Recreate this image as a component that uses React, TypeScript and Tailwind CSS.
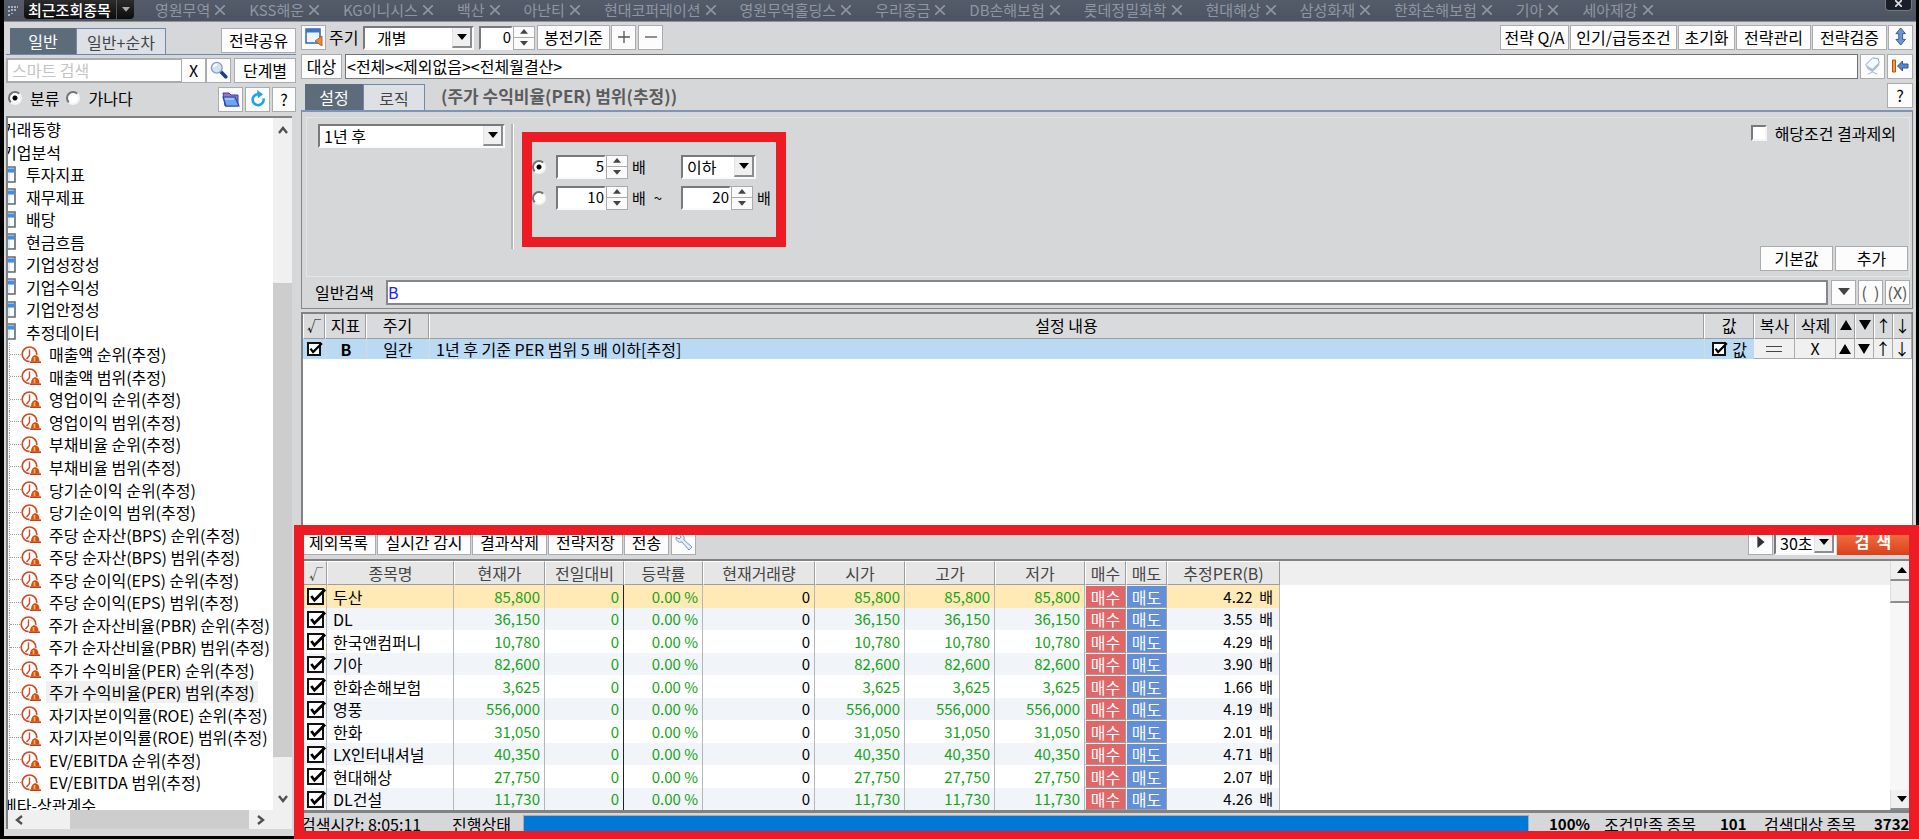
import React from "react";

const openTabs = [
  "영원무역", "KSS해운", "KG이니시스", "백산", "아난티", "현대코퍼레이션", "영원무역홀딩스", "우리종금",
  "DB손해보험", "롯데정밀화학", "현대해상", "삼성화재", "한화손해보험", "기아", "세아제강",
];

const folders = ["투자지표", "재무제표", "배당", "현금흐름", "기업성장성", "기업수익성", "기업안정성", "추정데이터"];

const indicators = [
  "매출액 순위(추정)", "매출액 범위(추정)", "영업이익 순위(추정)", "영업이익 범위(추정)",
  "부채비율 순위(추정)", "부채비율 범위(추정)", "당기순이익 순위(추정)", "당기순이익 범위(추정)",
  "주당 순자산(BPS) 순위(추정)", "주당 순자산(BPS) 범위(추정)", "주당 순이익(EPS) 순위(추정)", "주당 순이익(EPS) 범위(추정)",
  "주가 순자산비율(PBR) 순위(추정)", "주가 순자산비율(PBR) 범위(추정)", "주가 수익비율(PER) 순위(추정)", "주가 수익비율(PER) 범위(추정)",
  "자기자본이익률(ROE) 순위(추정)", "자기자본이익률(ROE) 범위(추정)", "EV/EBITDA 순위(추정)", "EV/EBITDA 범위(추정)",
];

const selectedIndicator = "주가 수익비율(PER) 범위(추정)";

const stocks = [
  { name: "두산", price: "85,800", per: "4.22" },
  { name: "DL", price: "36,150", per: "3.55" },
  { name: "한국앤컴퍼니", price: "10,780", per: "4.29" },
  { name: "기아", price: "82,600", per: "3.90" },
  { name: "한화손해보험", price: "3,625", per: "1.66" },
  { name: "영풍", price: "556,000", per: "4.19" },
  { name: "한화", price: "31,050", per: "2.01" },
  { name: "LX인터내셔널", price: "40,350", per: "4.71" },
  { name: "현대해상", price: "27,750", per: "2.07" },
  { name: "DL건설", price: "11,730", per: "4.26" },
];

function Btn({ className = "", children, label }: { className?: string; children: React.ReactNode; label?: string }) {
  return (
    <button
      type="button"
      aria-label={label}
      className={`flex h-[25px] shrink-0 items-center justify-center whitespace-nowrap border border-[#a9abad] bg-[#fcfcfc] pb-0.5 leading-5 ${className}`}
    >
      {children}
    </button>
  );
}

function Tri({ dir, className = "w-2.5" }: { dir: "up" | "down" | "right"; className?: string }) {
  const d = dir === "up" ? "M0 6 5 0l5 6z" : dir === "down" ? "M0 0h10L5 6z" : "M2 0v10l6-5z";
  return (
    <svg viewBox={dir === "right" ? "0 0 10 10" : "0 0 10 6"} preserveAspectRatio="none" className={className} fill="currentColor" aria-hidden="true">
      <path d={d} />
    </svg>
  );
}

function Select({ label, value, className = "" }: { label: string; value: string; className?: string }) {
  return (
    <span className={`flex h-6 shrink-0 border-2 border-[#fafafa] border-t-[#77797b] border-l-[#77797b] bg-white ${className}`}>
      <select aria-label={label} className="min-w-0 flex-1 appearance-none bg-white pb-0.5 pl-1 leading-5 outline-none">
        <option>{value}</option>
      </select>
      <span className="flex w-5 shrink-0 items-center justify-center border-r-2 border-b-2 border-l border-[#8a8c8e] border-l-[#e4e4e4] bg-[#f0f0f0]">
        <Tri dir="down" className="w-2.5" />
      </span>
    </span>
  );
}

function NumberBox({ label, value, className = "w-[50px]" }: { label: string; value: string; className?: string }) {
  return (
    <span className="flex h-6 shrink-0">
      <input
        aria-label={label}
        defaultValue={value}
        className={`h-6 border-2 border-[#fafafa] border-t-[#77797b] border-l-[#77797b] bg-white pb-0.5 text-right text-[15px] outline-none ${className}`}
      />
      <span className="flex w-[22px] flex-col border border-[#a9abad] bg-[#fafafa] text-[#444]">
        <button type="button" aria-label={`${label} 증가`} className="flex flex-1 items-center justify-center border-b border-[#a9abad]">
          <Tri dir="up" className="w-2" />
        </button>
        <button type="button" aria-label={`${label} 감소`} className="flex flex-1 items-center justify-center">
          <Tri dir="down" className="w-2" />
        </button>
      </span>
    </span>
  );
}

function Radio({ name, label, checked }: { name: string; label: string; checked?: boolean }) {
  return (
    <input
      type="radio"
      name={name}
      aria-label={label}
      defaultChecked={checked}
      className="m-0 size-3.5 shrink-0 appearance-none rounded-full border-2 border-[#f4f4f4] border-t-[#707274] border-l-[#707274] bg-white checked:bg-[radial-gradient(circle,#000_0_2px,#fff_3px)]"
    />
  );
}

function Check({ label, className = "size-4" }: { label: string; className?: string }) {
  return (
    <span className={`relative block shrink-0 ${className}`}>
      <input type="checkbox" aria-label={label} defaultChecked className="block size-full appearance-none border-2 border-[#111] bg-white" />
      <svg viewBox="0 0 16 16" className="pointer-events-none absolute inset-0 size-full overflow-visible" fill="none" stroke="#000" strokeWidth="2.6" aria-hidden="true">
        <path d="M4 7.5 7 11.5 17 1.5" />
      </svg>
    </span>
  );
}

function ClockIcon() {
  return (
    <svg viewBox="0 0 20 17" className="h-[17px] w-5 shrink-0" fill="none" aria-hidden="true">
      <circle cx="8.500" cy="8.300" r="7.300" fill="#fff" stroke="#cf4a20" strokeWidth="1.700" />
      <path d="M8.500 3.500v6L5.500 13" stroke="#c9502c" strokeWidth="1.400" />
      <path d="M8.500 17C8.500 5.500 20 5.500 20 17z" fill="#fff" />
      <path d="M10 15.500c0-8.500 8.500-8.500 8.500 0z" fill="#d84a16" />
      <path d="M13.500 11v4" stroke="#f8b830" strokeWidth="1.800" />
      <path d="M9 16.200h11" stroke="#b8380e" strokeWidth="1.500" />
    </svg>
  );
}

function FolderIcon() {
  return (
    <svg viewBox="0 0 14 17" className="h-[17px] w-3.5 shrink-0" aria-hidden="true">
      <path d="M0 1h13v15H0z" fill="#d9ecfb" stroke="#666a70" strokeWidth="1.600" />
      <path d="M1 2.500h11v4H1z" fill="#3f8fe8" />
      <path d="M8 7h4v8H8z" fill="#fff" />
    </svg>
  );
}

function Sidebar() {
  return (
    <aside className="flex w-[292px] shrink-0 flex-col pt-1.5 pb-[7px] pl-0.5">
      <div className="flex h-[27px] items-start justify-between border-b border-[#6f88b0]">
        <div className="ml-1 flex">
          <button type="button" className="h-[26px] w-[66px] bg-[#5d6c7b] leading-6 text-white">일반</button>
          <button type="button" className="h-[26px] w-[90px] border border-b-0 border-[#6f88b0] bg-[#dde0e4] leading-6 text-[#444]">일반+순차</button>
        </div>
        <Btn className="w-[75px]">전략공유</Btn>
      </div>
      <div className="mt-[3px] flex h-[25px]">
        <input aria-label="스마트 검색" placeholder="스마트 검색" className="h-[25px] min-w-0 flex-1 border-2 border-r border-[#a9abad] bg-white pb-0.5 pl-1 outline-none placeholder:text-[#c4c4c4]" />
        <Btn className="w-6 border-l-0" label="지우기">X</Btn>
        <Btn className="w-[25px]" label="검색">
          <svg viewBox="0 0 20 20" className="size-[18px]" aria-hidden="true">
            <path d="m11.500 11.500 6 6" stroke="#1d3f80" strokeWidth="4" strokeLinecap="round" />
            <circle cx="7.500" cy="7.500" r="6" fill="#cfe3f7" stroke="#8d9fc0" strokeWidth="1.500" />
            <path d="M4 7a4 4 0 0 1 4-3" stroke="#fff" strokeWidth="1.800" fill="none" />
          </svg>
        </Btn>
        <Btn className="ml-[3px] w-[62px]">단계별</Btn>
      </div>
      <div className="mt-1 flex h-[25px] items-start">
        <label className="ml-0.5 flex items-center gap-2 leading-[22px]"><Radio name="sort" label="분류" checked />분류</label>
        <label className="ml-[7px] flex items-center gap-2 leading-[22px]"><Radio name="sort" label="가나다" />가나다</label>
        <div className="ml-auto flex gap-0.5">
          <Btn className="w-[25px]" label="폴더">
            <svg viewBox="0 0 18 18" className="size-[18px]" aria-hidden="true">
              <path d="M1 3h6l2 2h7v11H3z" fill="#9a78b8" stroke="#3c3fa8" />
              <path d="M1 7h12l4 9H4z" fill="#6fa4ee" stroke="#2546b4" strokeWidth="1.200" />
              <path d="m3 9 9 0" stroke="#cfe2ff" />
            </svg>
          </Btn>
          <Btn className="w-[25px]" label="새로고침">
            <svg viewBox="0 0 18 18" className="size-[18px]" fill="none" aria-hidden="true">
              <path d="M14.500 8.500a5.500 5.500 0 1 1-5-4.300" stroke="#1fa3e6" strokeWidth="2.600" />
              <path d="m8 0 6 4.300-5 4z" fill="#1fa3e6" />
            </svg>
          </Btn>
          <Btn className="w-6" label="도움말">?</Btn>
        </div>
      </div>
      <div className="mt-1 mr-1 flex min-h-0 flex-1 flex-col border-t-2 border-l-2 border-[#808284] bg-white">
        <div className="flex min-h-0 flex-1">
          <div className="min-w-0 flex-1 overflow-hidden">
            <ul className="flex h-[698px] flex-col leading-[22px]">
              <li className="-ml-1.5 flex flex-1 items-center">거래동향</li>
              <li className="-ml-1.5 flex flex-1 items-center">기업분석</li>
              {folders.map((f) => (
                <li key={f} className="-ml-1.5 flex flex-1 items-center gap-2.5"><FolderIcon />{f}</li>
              ))}
              {indicators.map((t) => (
                <li key={t} className="ml-px flex flex-1 items-center border-l border-dotted border-[#999]">
                  <span className="w-[11px] border-t border-dotted border-[#999]" />
                  <ClockIcon />
                  <button type="button" className={t === selectedIndicator ? "ml-[5px] bg-[#f0f0f0] px-[3px] whitespace-nowrap" : "ml-[5px] px-[3px] whitespace-nowrap"}>{t}</button>
                </li>
              ))}
              <li className="-ml-1.5 flex flex-1 items-center">베타-상관계수</li>
            </ul>
          </div>
          <div className="flex w-[19px] shrink-0 flex-col items-center bg-[#f0f0f0] text-[#505050]">
            <svg viewBox="0 0 10 8" className="mt-2 w-2.5" fill="none" stroke="currentColor" strokeWidth="2.400" aria-hidden="true"><path d="m1 7 4-5 4 5" /></svg>
            <span className="mt-[149px] min-h-0 w-full flex-1 bg-[#cdcdcd]" />
            <svg viewBox="0 0 10 8" className="mt-[38px] mb-[7px] w-2.5" fill="none" stroke="currentColor" strokeWidth="2.400" aria-hidden="true"><path d="m1 1 4 5 4-5" /></svg>
          </div>
        </div>
        <div className="flex h-[19px] shrink-0 items-center bg-[#f0f0f0] text-[#505050]">
          <svg viewBox="0 0 8 10" className="ml-[7px] w-2" fill="none" stroke="currentColor" strokeWidth="2.400" aria-hidden="true"><path d="M7 1 2 5l5 4" /></svg>
          <span className="ml-[47px] h-full flex-1 bg-[#cdcdcd]" />
          <svg viewBox="0 0 8 10" className="mr-[27px] ml-2 w-2" fill="none" stroke="currentColor" strokeWidth="2.400" aria-hidden="true"><path d="m1 1 5 4-5 4" /></svg>
        </div>
      </div>
    </aside>
  );
}

function Toolbar() {
  return (
    <>
      <div className="flex h-[25px] items-center">
        <Btn className="w-[25px]" label="창">
          <svg viewBox="0 0 20 20" className="size-5" aria-hidden="true">
            <path d="M2 2h14v14H2z" fill="#eef6ff" stroke="#2f66b8" strokeWidth="1.500" />
            <path d="M2 2h14v3.500H2z" fill="#3a74c8" />
            <path d="M18 9v10l-7-5z" fill="#ee8a3a" stroke="#a8501a" strokeWidth=".8" />
          </svg>
        </Btn>
        <span className="ml-[3px] w-[34px] pb-0.5">주기</span>
        <Select label="주기" value="개별" className="w-[111px] pl-2" />
        <span className="ml-[5px]"><NumberBox label="봉전" value="0" className="w-[34px]" /></span>
        <Btn className="ml-0.5 w-[73px]">봉전기준</Btn>
        <Btn className="ml-px w-[25px]" label="추가"><svg viewBox="0 0 12 12" className="size-3" stroke="#555" strokeWidth="1.300" aria-hidden="true"><path d="M0 6h12M6 0v12" /></svg></Btn>
        <Btn className="ml-0.5 w-[25px]" label="삭제"><svg viewBox="0 0 12 12" className="size-3" stroke="#555" strokeWidth="1.300" aria-hidden="true"><path d="M0 6h12" /></svg></Btn>
        <div className="ml-auto flex gap-px">
          <Btn className="w-[69px]">전략 Q/A</Btn>
          <Btn className="w-[107px]">인기/급등조건</Btn>
          <Btn className="w-[57px]">초기화</Btn>
          <Btn className="w-[75px]">전략관리</Btn>
          <Btn className="w-[75px]">전략검증</Btn>
          <Btn className="w-[25px]" label="펼치기">
            <svg viewBox="0 0 12 20" className="h-[19px]" aria-hidden="true"><path d="m6 1 5 6H8v6h3l-5 6-5-6h3V7H1z" fill="#6e96d2" stroke="#33558e" /></svg>
          </Btn>
        </div>
      </div>
      <div className="mt-1 flex h-[25px]">
        <Btn className="w-[41px]">대상</Btn>
        <input aria-label="대상" defaultValue="<전체><제외없음><전체월결산>" className="ml-[3px] h-[25px] min-w-0 flex-1 border border-[#707274] bg-white px-px pb-0.5 outline-none" />
        <Btn className="ml-0.5 w-[25px]" label="지우개">
          <svg viewBox="0 0 18 20" className="h-[19px]" aria-hidden="true">
            <path d="m2 9 7-7 6 1 1 4-7 7-5-1z" fill="#f6fbff" stroke="#7e9cc8" />
            <path d="m2 9 7 5v3l-5-3zM9 14l7-7v3l-7 7z" fill="#a9bfdc" />
            <path d="m4 19 5-2 5 2" fill="none" stroke="#a8b4c4" />
          </svg>
        </Btn>
        <Btn className="ml-0.5 w-[26px]" label="접기">
          <svg viewBox="0 0 18 14" className="w-[18px]" aria-hidden="true">
            <path d="M1.500 1h3v12h-3z" fill="#f59a3c" stroke="#b5560e" />
            <path d="m6.500 7 5-5v3H17v4h-5.500v3z" fill="#5a86c8" stroke="#33558e" />
          </svg>
        </Btn>
      </div>
    </>
  );
}

function SettingsPanel() {
  return (
    <>
      <div className="mt-1 flex h-[27px] items-start">
        <button type="button" className="mt-px ml-1 h-[26px] w-[58px] bg-[#5d6c7b] leading-6 text-white">설정</button>
        <button type="button" className="mt-px h-[26px] w-[62px] border border-b-0 border-[#6f88b0] bg-[#dde0e4] leading-6 text-[#444]">로직</button>
        <h2 className="ml-4 text-[17px] leading-[26px] font-bold text-[#5c5c5c]">(주가 수익비율(PER) 범위(추정))</h2>
        <Btn className="ml-auto w-[26px]" label="도움말">?</Btn>
      </div>
      <section className="border border-t-2 border-[#85878a] border-t-[#7f94b6] pr-0.5 pb-[3px] pl-1">
        <div className="mt-[5px] flex h-40 border border-[#e4e5e6] pl-[11px]">
          <div className="pt-1.5"><Select label="기간" value="1년 후" className="w-[187px]" /></div>
          <div className="mt-1.5 ml-1.5 h-[125px] w-[3px] border-r border-l-2 border-[#b4b6b8] border-r-white" />
          <fieldset className="mt-3.5 ml-2 h-[115px] w-[264px] border-10 border-[#ed1c24] pt-3">
            <div className="flex h-[25px] items-center">
              <Radio name="range" label="이하 조건" checked />
              <span className="ml-2.5"><NumberBox label="배수" value="5" /></span>
              <span className="ml-1 w-[49px] text-[15px]">배</span>
              <Select label="비교" value="이하" className="w-[75px]" />
            </div>
            <div className="mt-1.5 flex h-[25px] items-center">
              <Radio name="range" label="범위 조건" />
              <span className="ml-2.5"><NumberBox label="최소" value="10" /></span>
              <span className="ml-1 flex w-[49px] gap-2 text-[15px]">배 <span>~</span></span>
              <NumberBox label="최대" value="20" />
              <span className="ml-1 text-[15px]">배</span>
            </div>
          </fieldset>
          <div className="ml-auto flex flex-col items-end justify-between pt-1 pr-px pb-[5px]">
            <label className="mr-3 flex items-center gap-2 leading-[22px]">
              <input type="checkbox" className="size-4 appearance-none border-2 border-[#f4f4f4] border-t-[#77797b] border-l-[#77797b] bg-white" />
              해당조건 결과제외
            </label>
            <div className="flex gap-0.5">
              <Btn className="w-[73px]">기본값</Btn>
              <Btn className="w-[73px]">추가</Btn>
            </div>
          </div>
        </div>
        <div className="mt-[3px] flex h-[25px] items-center gap-0.5 pl-[9px]">
          <label htmlFor="expr" className="w-[69px] pb-0.5">일반검색</label>
          <input id="expr" defaultValue="B" className="h-[25px] min-w-0 flex-1 border-2 border-[#85878a] bg-white pb-0.5 text-[#2020ff] outline-none" />
          <Btn className="ml-px w-[25px] text-[#444]" label="목록"><Tri dir="down" className="w-3" /></Btn>
          <Btn className="w-[25px] text-[#555]">(&nbsp; )</Btn>
          <Btn className="w-[25px] text-[#555]">(X)</Btn>
        </div>
      </section>
    </>
  );
}

const ruleHead = "h-[25px] border-r border-b border-[#9c9ea0] border-l border-l-white bg-[#d9dadc] p-0 pb-0.5 font-normal";
const ruleBtn = "border-r border-b border-[#a9abad] bg-[#f0f0f0] p-0";

function RuleGrid() {
  return (
    <section className="mt-[3px] min-h-0 flex-1 border-t-2 border-r border-l-2 border-[#808284] bg-white">
      <table className="w-full table-fixed border-separate border-spacing-0 text-center leading-5">
        <colgroup>
          <col className="w-[22px]" /><col className="w-[41px]" /><col className="w-[63px]" /><col />
          <col className="w-[50px]" /><col className="w-[41px]" /><col className="w-[41px]" />
          <col className="w-[19px]" /><col className="w-[19px]" /><col className="w-[19px]" /><col className="w-[19px]" />
        </colgroup>
        <thead>
          <tr>
            <th className={`${ruleHead} text-sm`}>√</th>
            {["지표", "주기", "설정 내용", "값", "복사", "삭제"].map((h) => <th key={h} className={ruleHead}>{h}</th>)}
            <th className={ruleHead}><Tri dir="up" className="mx-auto h-2.5 w-3" /></th>
            <th className={ruleHead}><Tri dir="down" className="mx-auto h-2.5 w-3" /></th>
            <th className={ruleHead}>↑</th>
            <th className={ruleHead}>↓</th>
          </tr>
        </thead>
        <tbody className="leading-[19px]">
          <tr className="bg-[#bad9f3]">
            <td className="p-0"><Check label="조건 B 사용" className="mx-auto size-3.5" /></td>
            <td className="border-l border-[#d6d8da] p-0 font-bold">B</td>
            <td className="border-l border-[#d6d8da] p-0">일간</td>
            <td className="border-l border-[#d6d8da] p-0 pl-1.5 text-left">1년 후 기준 PER 범위 5 배 이하[추정]</td>
            <td className="border-l border-[#d6d8da] p-0"><span className="flex items-center justify-center gap-1.5"><Check label="값 표시" className="size-3.5" />값</span></td>
            <td className={ruleBtn}><button type="button" aria-label="복사" className="mx-auto block h-1.5 w-4 border-y border-[#444]" /></td>
            <td className={ruleBtn}><button type="button" className="block w-full">X</button></td>
            <td className={ruleBtn}><button type="button" aria-label="맨 위로" className="block w-full"><Tri dir="up" className="mx-auto h-2.5 w-3" /></button></td>
            <td className={ruleBtn}><button type="button" aria-label="맨 아래로" className="block w-full"><Tri dir="down" className="mx-auto h-2.5 w-3" /></button></td>
            <td className={ruleBtn}><button type="button" className="block w-full">↑</button></td>
            <td className={ruleBtn}><button type="button" className="block w-full">↓</button></td>
          </tr>
        </tbody>
      </table>
    </section>
  );
}

const resultHead = "h-6 border border-white border-r-[#9c9ea0] border-b-[#9c9ea0] bg-[#e6e6e6] p-0 font-normal text-[#444]";
const greenCell = "border-r border-[#b4b6b8] p-0 pr-1 text-right text-[15px] text-[#17a217]";

function Results() {
  return (
    <section className="relative shrink-0">
      <div className="flex h-[34px] items-end gap-px pb-1">
        <Btn className="w-[75px]">제외목록</Btn>
        <Btn className="w-[94px]">실시간 감시</Btn>
        <Btn className="w-[75px]">결과삭제</Btn>
        <Btn className="w-[75px]">전략저장</Btn>
        <Btn className="w-[45px]">전송</Btn>
        <Btn className="ml-px w-[25px]" label="설정">
          <svg viewBox="0 0 20 20" className="size-5" aria-hidden="true">
            <path d="M2 5a4.500 4.500 0 0 0 6 5l7 8 3-3-8-7a4.500 4.500 0 0 0-5-6l2 3-2 2z" fill="#e3ecf6" stroke="#8296b4" />
          </svg>
        </Btn>
        <Btn className="ml-auto w-[25px] text-[#333]" label="시작"><Tri dir="right" className="size-3" /></Btn>
        <Select label="간격" value="30초" className="w-[62px]" />
        <button type="button" className="h-[25px] w-[76px] bg-linear-to-b from-[#f27445] to-[#dc3f18] pr-1 pb-1 text-base leading-5 font-bold text-white">검 &nbsp;색</button>
      </div>
      <div className="flex border-t-2 border-b-3 border-[#808284] bg-white">
        <div className="flex min-w-0 flex-1 bg-[#efefef]">
          <table className="w-[979px] table-fixed border-separate border-spacing-0 text-center">
            <colgroup>
              <col className="w-[26px]" /><col className="w-[127px]" /><col className="w-[91px]" /><col className="w-[79px]" />
              <col className="w-[79px]" /><col className="w-[112px]" /><col className="w-[90px]" /><col className="w-[90px]" />
              <col className="w-[90px]" /><col className="w-[41px]" /><col className="w-[41px]" /><col className="w-[113px]" />
            </colgroup>
            <thead className="leading-[22px]">
              <tr>
                <th className={`${resultHead} pl-1 text-sm leading-[22px]`}>√</th>
                {["종목명", "현재가", "전일대비", "등락률", "현재거래량", "시가", "고가", "저가", "매수", "매도", "추정PER(B)"].map((h) => (
                  <th key={h} className={resultHead}>{h}</th>
                ))}
              </tr>
            </thead>
            <tbody className="leading-5">
              {stocks.map((s, i) => (
                <tr key={s.name} className={`${i === 0 ? "bg-[#ffe9b5]" : i % 2 ? "bg-[#f1f4f9]" : "bg-white"} ${i % 2 ? "h-[22px]" : "h-[23px]"}`}>
                  <td className="border-r border-[#b4b6b8] p-0 pl-1"><Check label={`${s.name} 선택`} className="mx-auto size-[17px]" /></td>
                  <td className="border-r border-[#b4b6b8] p-0 pl-1.5 text-left whitespace-nowrap">{s.name}</td>
                  <td className={`${greenCell} leading-5`}>{s.price}</td>
                  <td className="border-r border-[#222] p-0 pr-1 text-right text-[15px] leading-5 text-[#17a217]">0</td>
                  <td className={`${greenCell} leading-5`}>0.00 %</td>
                  <td className="border-r border-[#b4b6b8] p-0 pr-1 text-right text-[15px] leading-5">0</td>
                  <td className={`${greenCell} leading-5`}>{s.price}</td>
                  <td className={`${greenCell} leading-5`}>{s.price}</td>
                  <td className={`${greenCell} leading-5`}>{s.price}</td>
                  <td className="border border-[#f0f0f0] border-r-[#9c9ea0] border-b-[#9c9ea0] bg-[#e06668] p-0 text-white"><button type="button" className="block w-full leading-5">매수</button></td>
                  <td className="border border-[#f0f0f0] border-r-[#9c9ea0] border-b-[#9c9ea0] bg-[#628fd8] p-0 text-white"><button type="button" className="block w-full leading-5">매도</button></td>
                  <td className="border-r border-[#b4b6b8] p-0 pr-1.5 text-right text-[15px] leading-5">{s.per} &nbsp;배</td>
                </tr>
              ))}
            </tbody>
          </table>
          <div className="mt-6 flex-1 bg-white" />
        </div>
        <div className="flex w-[23px] shrink-0 flex-col bg-[#f7f7f7]">
          <button type="button" aria-label="위로" className="flex h-5 w-full items-center border-b-2 border-l border-[#8a8c8e] border-l-[#ddd] bg-[#f0f0f0] pl-1.5"><Tri dir="up" className="w-2.5" /></button>
          <span className="h-[22px] w-full border-b-2 border-l border-[#8a8c8e] border-l-[#ddd] bg-[#f0f0f0]" />
          <button type="button" aria-label="아래로" className="mt-auto flex h-5 w-full items-center border-b-2 border-l border-[#8a8c8e] border-l-[#ddd] bg-[#f0f0f0] pl-1.5"><Tri dir="down" className="w-2.5" /></button>
        </div>
      </div>
      <div className="flex h-[23px] items-start leading-[22px] whitespace-nowrap">
        <span className="w-[151px]">검색시간: 8:05:11</span>
        <span className="w-[71px]">진행상태</span>
        <div role="progressbar" aria-label="진행상태" aria-valuenow={100} className="mt-0.5 h-5 flex-1 border border-[#a9abad] bg-[#0078d7]" />
        <b className="w-[75px] pl-5 text-[15px]">100%</b>
        <span className="w-[116px]">조건만족 종목</span>
        <b className="w-[44px] text-[15px]">101</b>
        <span className="w-[110px]">검색대상 종목</span>
        <b className="w-[39px] text-[15px]">3732</b>
      </div>
      <div className="pointer-events-none absolute top-0 -right-1.5 -bottom-[3px] -left-[7px] border-10 border-b-8 border-[#ed1c24]" />
    </section>
  );
}

export default function App() {
  return (
    <div className="flex h-screen flex-col overflow-hidden bg-black pr-[3px] pb-[3px] pl-1 font-['Noto_Sans_CJK_KR',sans-serif] text-base leading-5 text-black">
      <header className="flex h-[22px] shrink-0 items-start border-b border-[#8e9196] bg-linear-to-b from-[#545c6b] to-[#4c5461] text-[15px] leading-5">
        <svg viewBox="0 0 10 10" className="mt-1.5 ml-1 size-2.5 shrink-0" fill="#aab0ba" aria-hidden="true">
          <path d="M0 0h2v2H0zM3 0h2v2H3zM6 0h2v2H6zM9 0h1v2H9zM0 4h2v2H0zM3 3h2v2H3zM6 3h2v2H6zM0 8h2v2H0zM3 7h2v1H3z" />
        </svg>
        <div className="ml-1.5 flex h-[19px] w-[110px] shrink-0 rounded-b bg-linear-to-b from-[#2c2c2c] to-[#0c0c0c] pl-1 font-medium text-white">
          <span className="w-[89px] border-r border-[#555] whitespace-nowrap">최근조회종목</span>
          <button type="button" aria-label="최근조회종목 열기" className="flex flex-1 items-center justify-center text-[#aaa]"><Tri dir="down" className="w-2" /></button>
        </div>
        <nav className="ml-[21px] flex gap-6 text-[#8f96a2]">
          {openTabs.map((t) => (
            <a key={t} href="#" className="flex items-center gap-[5px] whitespace-nowrap">
              {t}
              <svg viewBox="0 0 10 10" className="size-2.5" stroke="currentColor" strokeWidth="1.600" aria-hidden="true"><path d="m0 0 10 10M10 0 0 10" /></svg>
            </a>
          ))}
        </nav>
        <button type="button" aria-label="닫기" className="mr-1 ml-auto flex h-[11px] w-[27px] justify-center rounded-b border border-t-0 border-[#777] bg-[#1a1e28]">
          <svg viewBox="0 0 8 8" className="size-[7px]" stroke="#ddd" strokeWidth="2" aria-hidden="true"><path d="m0 0 8 8M8 0 0 8" /></svg>
        </button>
      </header>
      <div className="flex min-h-0 flex-1 bg-[#d6d7d9]">
        <Sidebar />
        <main className="ml-[5px] flex min-w-0 flex-1 flex-col pt-[3px] pr-[3px]">
          <Toolbar />
          <SettingsPanel />
          <RuleGrid />
          <Results />
        </main>
      </div>
    </div>
  );
}
